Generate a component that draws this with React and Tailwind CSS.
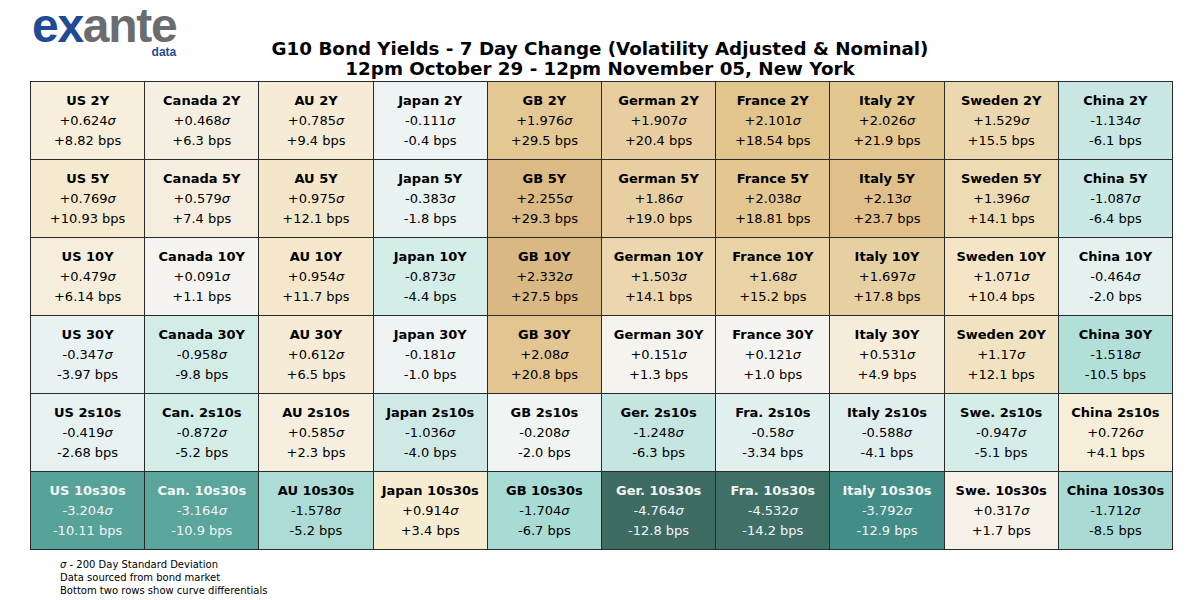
import React from "react";

const rows = [
  [
    ["US 2Y", "+0.624", "+8.82 bps", "#f7eedb"],
    ["Canada 2Y", "+0.468", "+6.3 bps", "#f5efe3"],
    ["AU 2Y", "+0.785", "+9.4 bps", "#f6ecd5"],
    ["Japan 2Y", "-0.111", "-0.4 bps", "#eef3f3"],
    ["GB 2Y", "+1.976", "+29.5 bps", "#e4c894"],
    ["German 2Y", "+1.907", "+20.4 bps", "#e7cd9f"],
    ["France 2Y", "+2.101", "+18.54 bps", "#e2c48d"],
    ["Italy 2Y", "+2.026", "+21.9 bps", "#e3c791"],
    ["Sweden 2Y", "+1.529", "+15.5 bps", "#ecd8ae"],
    ["China 2Y", "-1.134", "-6.1 bps", "#c8e7e2"],
  ],
  [
    ["US 5Y", "+0.769", "+10.93 bps", "#f5e9cf"],
    ["Canada 5Y", "+0.579", "+7.4 bps", "#f5eee0"],
    ["AU 5Y", "+0.975", "+12.1 bps", "#f4e6c8"],
    ["Japan 5Y", "-0.383", "-1.8 bps", "#e8f2f1"],
    ["GB 5Y", "+2.255", "+29.3 bps", "#dbba86"],
    ["German 5Y", "+1.86", "+19.0 bps", "#e8cfa2"],
    ["France 5Y", "+2.038", "+18.81 bps", "#e3c690"],
    ["Italy 5Y", "+2.13", "+23.7 bps", "#dfc08a"],
    ["Sweden 5Y", "+1.396", "+14.1 bps", "#eddbb4"],
    ["China 5Y", "-1.087", "-6.4 bps", "#cbe9e4"],
  ],
  [
    ["US 10Y", "+0.479", "+6.14 bps", "#f6eedd"],
    ["Canada 10Y", "+0.091", "+1.1 bps", "#f5f4f0"],
    ["AU 10Y", "+0.954", "+11.7 bps", "#f5e7cb"],
    ["Japan 10Y", "-0.873", "-4.4 bps", "#d3ede9"],
    ["GB 10Y", "+2.332", "+27.5 bps", "#d9b883"],
    ["German 10Y", "+1.503", "+14.1 bps", "#ebd6ad"],
    ["France 10Y", "+1.68", "+15.2 bps", "#e9d2a5"],
    ["Italy 10Y", "+1.697", "+17.8 bps", "#e6cfa0"],
    ["Sweden 10Y", "+1.071", "+10.4 bps", "#f3e5c6"],
    ["China 10Y", "-0.464", "-2.0 bps", "#e5f1ef"],
  ],
  [
    ["US 30Y", "-0.347", "-3.97 bps", "#e8f2f2"],
    ["Canada 30Y", "-0.958", "-9.8 bps", "#d2ece8"],
    ["AU 30Y", "+0.612", "+6.5 bps", "#f5ebd6"],
    ["Japan 30Y", "-0.181", "-1.0 bps", "#eef4f4"],
    ["GB 30Y", "+2.08", "+20.8 bps", "#e2c590"],
    ["German 30Y", "+0.151", "+1.3 bps", "#f5f3ee"],
    ["France 30Y", "+0.121", "+1.0 bps", "#f5f4f0"],
    ["Italy 30Y", "+0.531", "+4.9 bps", "#f5edda"],
    ["Sweden 20Y", "+1.17", "+12.1 bps", "#f1e2c1"],
    ["China 30Y", "-1.518", "-10.5 bps", "#b2e0d9"],
  ],
  [
    ["US 2s10s", "-0.419", "-2.68 bps", "#e6f1f0"],
    ["Can. 2s10s", "-0.872", "-5.2 bps", "#d3ede9"],
    ["AU 2s10s", "+0.585", "+2.3 bps", "#f6efe0"],
    ["Japan 2s10s", "-1.036", "-4.0 bps", "#cfeae6"],
    ["GB 2s10s", "-0.208", "-2.0 bps", "#f0f4f3"],
    ["Ger. 2s10s", "-1.248", "-6.3 bps", "#c4e5e0"],
    ["Fra. 2s10s", "-0.58", "-3.34 bps", "#e1f0ee"],
    ["Italy 2s10s", "-0.588", "-4.1 bps", "#e0efed"],
    ["Swe. 2s10s", "-0.947", "-5.1 bps", "#d4ede9"],
    ["China 2s10s", "+0.726", "+4.1 bps", "#f6eed8"],
  ],
  [
    ["US 10s30s", "-3.204", "-10.11 bps", "#57a39a", true],
    ["Can. 10s30s", "-3.164", "-10.9 bps", "#5aa59c", true],
    ["AU 10s30s", "-1.578", "-5.2 bps", "#acdcd5"],
    ["Japan 10s30s", "+0.914", "+3.4 bps", "#f6ecd2"],
    ["GB 10s30s", "-1.704", "-6.7 bps", "#a8dbd3"],
    ["Ger. 10s30s", "-4.764", "-12.8 bps", "#3e6c63", true],
    ["Fra. 10s30s", "-4.532", "-14.2 bps", "#3f7068", true],
    ["Italy 10s30s", "-3.792", "-12.9 bps", "#428d87", true],
    ["Swe. 10s30s", "+0.317", "+1.7 bps", "#f5f1e9"],
    ["China 10s30s", "-1.712", "-8.5 bps", "#a9dbd4"],
  ],
];

function Cell({ name, sigma, bps, bg, light }) {
  return (
    <div
      className={
        "flex h-[78px] flex-col items-center justify-center border-b border-r border-[#2a2a2a] text-[13px] leading-[20px] " +
        (light ? "text-[#f4f4f4]" : "text-black")
      }
      style={{ backgroundColor: bg }}
    >
      <div className="font-bold">{name}</div>
      <div>
        {sigma}
        <span className="italic">σ</span>
      </div>
      <div>{bps}</div>
    </div>
  );
}

export default function App() {
  return (
    <div className="h-[600px] w-[1200px] overflow-hidden bg-white font-['DejaVu_Sans',sans-serif] text-black">
      <div className="grid h-[81px] grid-cols-[1fr_auto_1fr]">
        <div className="pl-[32px] pt-[7px]">
          <div className="flex w-fit flex-col items-end font-['Liberation_Sans',Arial,sans-serif] font-bold">
            <div className="text-[48px] leading-[38px] tracking-[-1.3px]">
              <span className="text-[#1f4b94]">ex</span>
              <span className="text-[#6b6c6f]">ante</span>
            </div>
            <div className="mt-[2px] text-[12px] leading-[10px] text-[#1f4b94]">data</div>
          </div>
        </div>
        <div className="pt-[39px] text-center text-[18.3px] font-bold leading-[20px]">
          <div>G10 Bond Yields - 7 Day Change (Volatility Adjusted &amp; Nominal)</div>
          <div>12pm October 29 - 12pm November 05, New York</div>
        </div>
        <div />
      </div>
      <div className="ml-[30px] grid w-[1143px] grid-cols-10 border-l border-t border-[#2a2a2a]">
        {rows.flat().map((c, i) => (
          <Cell key={i} name={c[0]} sigma={c[1]} bps={c[2]} bg={c[3]} light={c[4]} />
        ))}
      </div>
      <div className="ml-[60px] mt-[8px] text-[10px] leading-[13px]">
        <div>
          <span className="italic">σ</span> - 200 Day Standard Deviation
        </div>
        <div>Data sourced from bond market</div>
        <div>Bottom two rows show curve differentials</div>
      </div>
    </div>
  );
}
